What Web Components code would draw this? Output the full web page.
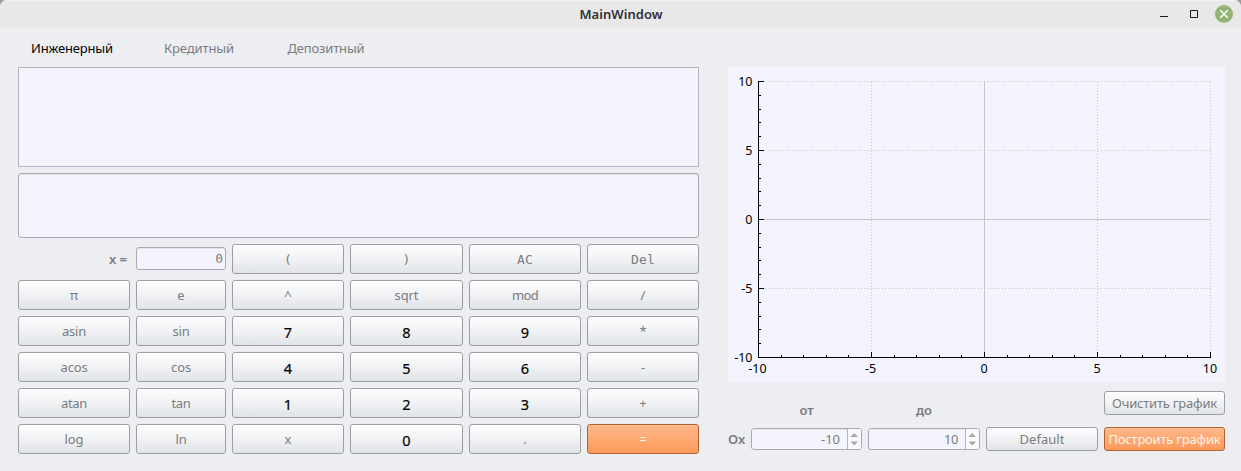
<!DOCTYPE html>
<html lang="ru">
<head>
<meta charset="utf-8">
<title>MainWindow</title>
<style>
html,body{margin:0;padding:0;width:1241px;height:471px;overflow:hidden;background:#9a9c9e;font-family:"Noto Sans","DejaVu Sans",sans-serif;font-size:13px;color:#7b7c80}
</style>
</head>
<body>
<main-window></main-window>
<script>
const define=(name,html,init)=>customElements.define(name,class extends HTMLElement{
  connectedCallback(){
    if(this.shadowRoot)return;
    const t=document.createElement('template');
    t.innerHTML=html;
    this.attachShadow({mode:'open'}).append(t.content.cloneNode(true));
    if(init)init.call(this,this.shadowRoot);
  }
});

/* Text label; the w attribute is its advance width, reached by tracking. */
define('ui-label',`<style>:host{display:inline-block;white-space:pre;line-height:18px}span{display:inline-block}</style><span><slot></slot></span>`,function(root){
  const w=parseFloat(this.getAttribute('w')),n=this.textContent.length;
  if(!w)return;
  const s=root.querySelector('span'),now=s.getBoundingClientRect().width,d=(w-now)/n;
  s.style.letterSpacing=d+'px';
});

define('ui-button',`<style>
:host{display:flex;box-sizing:border-box;align-items:center;justify-content:center;border:1px solid #9c9ea3;border-radius:3px;background:linear-gradient(#fdfdfe,#f4f5f7 40%,#e0e3e8);box-shadow:inset 0 1px #fff;color:#7b7c80}
:host([accent]){border-color:#b3612f;background:linear-gradient(#ffb78a,#fc9a5a);box-shadow:inset 0 1px #ffc09a;color:#fff3ea}
:host([digit]){color:#000;font-size:14.5px;-webkit-text-stroke:.2px #000;padding-top:1px}
:host([mono]){font-family:"DejaVu Sans Mono","Liberation Mono",monospace;font-size:13px;padding-top:2px}
</style><slot></slot>`);

define('ui-field',`<style>
:host{display:flex;box-sizing:border-box;border:1px solid #a9abb0;border-radius:3px;background:#f3f4fd;box-shadow:inset 0 1px #e2e3ea;justify-content:flex-end;align-items:center}
:host([flat]){border-radius:0;box-shadow:none;border-color:#b4b6bc}
</style><slot></slot>`);

define('ui-spin',`<style>
:host{display:flex;box-sizing:border-box;height:22px;border:1px solid #a9abb0;border-radius:3px;background:#f3f4fd;overflow:hidden}
.v{flex:1;display:flex;justify-content:flex-end;align-items:center;padding-right:7px;box-shadow:inset 0 1px #e4e5ec}
.a{width:13px;border-left:1px solid #b4b5ba;background:#fafafc}svg{display:block}
</style><div class="v"><slot></slot></div><div class="a"><svg width="13" height="20"><path d="M2.500 8 6.250 4 10 8zM2.500 12.500H10L6.250 16.500z" fill="#a5a6aa"/></svg></div>`);

define('title-bar',`<style>
:host{display:grid;grid-template-columns:1fr auto 1fr;align-items:center;height:28px;background:#e8e8e8;color:#303236;box-shadow:inset 0 1px #f0f0f0}
.t{font-weight:600;font-size:13px;display:flex;padding-left:1px}svg{display:block;justify-self:end}
</style><span></span><div class="t"><slot></slot></div><svg width="90" height="28"><path d="M9 16.500h8" stroke="#17181c"/><path d="M39.500 10.500h7v7h-7z" fill="none" stroke="#17181c"/><circle cx="73" cy="14" r="9" fill="#92b372"/><path d="m69.300 10.300 7.400 7.400m0-7.400-7.400 7.400" stroke="#fff" stroke-width="1.500"/></svg>`);

define('tab-strip',`<style>
:host{display:grid;grid-template-columns:133px 123.500px auto;padding:11px 0 0 31px;height:28px;box-sizing:border-box}
</style><ui-label w="82" style="color:#000">Инженерный</ui-label><ui-label w="70">Кредитный</ui-label><ui-label w="77">Депозитный</ui-label>`);

define('calc-keys',`<style>
:host{display:grid;grid-template-columns:112px 90px 112px 113px 112px 112px;grid-auto-rows:30px;gap:6px}
.x{align-self:center;justify-self:end;padding-right:3px;font-weight:600}
ui-field{height:23px;align-self:center;padding-right:2px;font-family:"DejaVu Sans Mono",monospace;margin-bottom:1px}
</style><ui-label class="x" w="18">x =</ui-label><ui-field><ui-label>0</ui-label></ui-field>`,function(root){
  const rows=[['(',')','AC','Del'],['π','e','^','sqrt','mod','/'],['asin','sin','7','8','9','*'],['acos','cos','4','5','6','-'],['atan','tan','1','2','3','+'],['log','ln','x','0','.','=']];
  const widths={AC:16,Del:24,sqrt:24,mod:26,asin:24,sin:17,acos:27,cos:20,atan:26,tan:19,log:19,ln:11};
  rows.forEach((row,i)=>row.forEach(k=>{
    const b=document.createElement('ui-button'),l=document.createElement('ui-label');
    if(i===0)b.setAttribute('mono','');
    if(/\d/.test(k))b.setAttribute('digit','');
    if(k==='=')b.setAttribute('accent','');
    if(widths[k])l.setAttribute('w',widths[k]);
    l.textContent=k;b.append(l);root.append(b);
  }));
});

define('function-plot',`<style>:host{display:block;width:497px;height:315px;background:#f3f4fd}svg{display:block}text{font-family:"Noto Sans",sans-serif;font-size:12.500px;fill:#000}</style><svg width="497" height="315"></svg>`,function(root){
  const X=v=>Math.round(256+v*22.6)+.5,Y=v=>Math.round(152-v*13.8)+.5;
  let s='';
  for(const v of [-5,5,10])s+=`<path d="M${X(v)} 15V290" stroke="#c3c3ca" stroke-dasharray="1 2"/>`;
  for(const v of [-5,5,10])s+=`<path d="M31 ${Y(v)}H482" stroke="#c3c3ca" stroke-dasharray="1 2"/>`;
  s+='<path d="M256.500 15V290M31 152.500H482" stroke="#c5c6cc"/>';
  s+='<path d="M30.500 14V291M30 290.500H483" stroke="#000"/>';
  for(let v=-10;v<=10;v++){
    const m=v%5===0;
    s+=`<path d="M${X(v)} 290v-${m?5:2}M31 ${Y(v)}h${m?5:2}" stroke="#000"/>`;
    if(m){
      s+=`<text x="${X(v)-(v<0?1:.5)}" y="306" text-anchor="middle">${v}</text>`;
      s+=`<text x="24.500" y="${Y(v)+4.5}" text-anchor="end">${v}</text>`;
    }
  }
  root.querySelector('svg').innerHTML=s;
});

define('plot-controls',`<style>
:host{display:grid;grid-template-columns:17px 111px 112px 112px 121px;column-gap:6px;grid-template-rows:24px 24px;row-gap:12px;align-items:center}
.h{align-self:end;justify-self:center;font-weight:600;margin-bottom:-4px}
ui-button{height:24px}b{font-weight:600}
</style><span></span><ui-label class="h" w="14">от</ui-label><ui-label class="h" w="16">до</ui-label><span></span><ui-button><ui-label w="105">Очистить график</ui-label></ui-button>
<b><ui-label w="17">Ox</ui-label></b><ui-spin><ui-label w="19">-10</ui-label></ui-spin><ui-spin><ui-label w="14">10</ui-label></ui-spin><ui-button><ui-label w="45">Default</ui-label></ui-button><ui-button accent><ui-label w="112">Построить график</ui-label></ui-button>`);

define('main-window',`<style>
:host{display:block;width:1241px;height:471px;border-radius:7px 7px 0 0;overflow:hidden;background:#edeef2}
.body{display:grid;grid-template-columns:681px 497px;column-gap:29px;padding:11px 0 0 18px}
.left{display:grid;grid-template-rows:100px 65px auto;gap:6px}
.right{display:grid;grid-template-rows:315px auto;row-gap:9px;align-content:start}
</style>
<title-bar><ui-label w="83">MainWindow</ui-label></title-bar>
<tab-strip></tab-strip>
<div class="body"><div class="left"><ui-field flat></ui-field><ui-field></ui-field><calc-keys></calc-keys></div><div class="right"><function-plot></function-plot><plot-controls></plot-controls></div></div>`);
</script>
</body>
</html>
